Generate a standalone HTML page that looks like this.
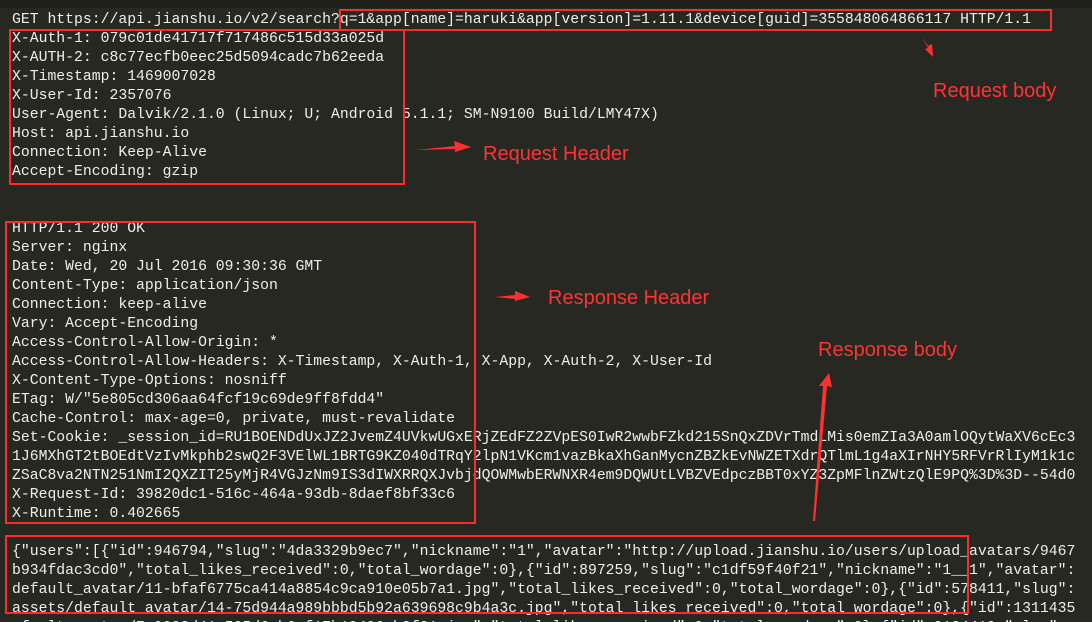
<!DOCTYPE html>
<html><head><meta charset="utf-8"><style>
html,body{margin:0;padding:0;background:#272822;width:1092px;height:622px;overflow:hidden;position:relative}
.top{position:absolute;left:0;top:0;width:1092px;height:8px;background:#1e1f1b}
pre{position:absolute;left:12px;margin:0;font-family:"Liberation Mono",monospace;font-size:14.77px;line-height:19px;color:#eeeeea;white-space:pre}
.box{position:absolute;border:2px solid #ff2b2b}
.lbl{position:absolute;color:#ff3333;font-family:"Liberation Sans",sans-serif;font-size:20px}
svg{position:absolute;left:0;top:0}
</style></head><body>
<div class="top"></div>
<pre style="top:11px">GET https://api.jianshu.io/v2/search?q=1&amp;app[name]=haruki&amp;app[version]=1.11.1&amp;device[guid]=355848064866117 HTTP/1.1
X-Auth-1: 079c01de41717f717486c515d33a025d
X-AUTH-2: c8c77ecfb0eec25d5094cadc7b62eeda
X-Timestamp: 1469007028
X-User-Id: 2357076
User-Agent: Dalvik/2.1.0 (Linux; U; Android 5.1.1; SM-N9100 Build/LMY47X)
Host: api.jianshu.io
Connection: Keep-Alive
Accept-Encoding: gzip</pre>
<pre style="top:220px">HTTP/1.1 200 OK
Server: nginx
Date: Wed, 20 Jul 2016 09:30:36 GMT
Content-Type: application/json
Connection: keep-alive
Vary: Accept-Encoding
Access-Control-Allow-Origin: *
Access-Control-Allow-Headers: X-Timestamp, X-Auth-1, X-App, X-Auth-2, X-User-Id
X-Content-Type-Options: nosniff
ETag: W/"5e805cd306aa64fcf19c69de9ff8fdd4"
Cache-Control: max-age=0, private, must-revalidate
Set-Cookie: _session_id=RU1BOENDdUxJZ2JvemZ4UVkwUGxERjZEdFZ2ZVpES0IwR2wwbFZkd215SnQxZDVrTmdLMis0emZIa3A0amlOQytWaXV6cEc3
1J6MXhGT2tBOEdtVzIvMkphb2swQ2F3VElWL1BRTG9KZ040dTRqY2lpN1VKcm1vazBkaXhGanMycnZBZkEvNWZETXdrQTlmL1g4aXIrNHY5RFVrRlIyM1k1c
ZSaC8va2NTN251NmI2QXZIT25yMjR4VGJzNm9IS3dIWXRRQXJvbjdQOWMwbERWNXR4em9DQWUtLVBZVEdpczBBT0xYZ3ZpMFlnZWtzQlE9PQ%3D%3D--54d0
X-Request-Id: 39820dc1-516c-464a-93db-8daef8bf33c6
X-Runtime: 0.402665</pre>
<pre style="top:543px">{"users":[{"id":946794,"slug":"4da3329b9ec7","nickname":"1","avatar":"http://upload.jianshu.io/users/upload_avatars/9467
b934fdac3cd0","total_likes_received":0,"total_wordage":0},{"id":897259,"slug":"c1df59f40f21","nickname":"1__1","avatar":
default_avatar/11-bfaf6775ca414a8854c9ca910e05b7a1.jpg","total_likes_received":0,"total_wordage":0},{"id":578411,"slug":
assets/default_avatar/14-75d944a989bbbd5b92a639698c9b4a3c.jpg","total_likes_received":0,"total_wordage":0},{"id":1311435
efault_avatar/7-0993d41a595d6ab6ef17b19496eb2f21.jpg","total_likes_received":0,"total_wordage":0},{"id":2124410,"slug":</pre>
<div class="box" style="left:339px;top:9px;width:709px;height:18px"></div>
<div class="box" style="left:9px;top:29px;width:392px;height:152px"></div>
<div class="box" style="left:5px;top:221px;width:467px;height:299px"></div>
<div class="box" style="left:5px;top:535px;width:960px;height:75px"></div>
<div class="lbl" style="left:933px;top:80px">Request body</div>
<div class="lbl" style="left:483px;top:143px">Request Header</div>
<div class="lbl" style="left:548px;top:287px">Response Header</div>
<div class="lbl" style="left:818px;top:339px">Response body</div>
<svg width="1092" height="622">
<g fill="#ff3030">
<polygon points="922,37 928,46 932,44 933,57 925,49 928,48"/>
<polygon points="416,150 455,146 454,141 471,147 455,152 455,149"/>
<polygon points="495,297 515,295 515,291 530,297 515,301 515,299"/>
<polygon points="813,521 823,386 819,386 829,373 832,387 827,386 815,521"/>
</g>
</svg>
</body></html>
